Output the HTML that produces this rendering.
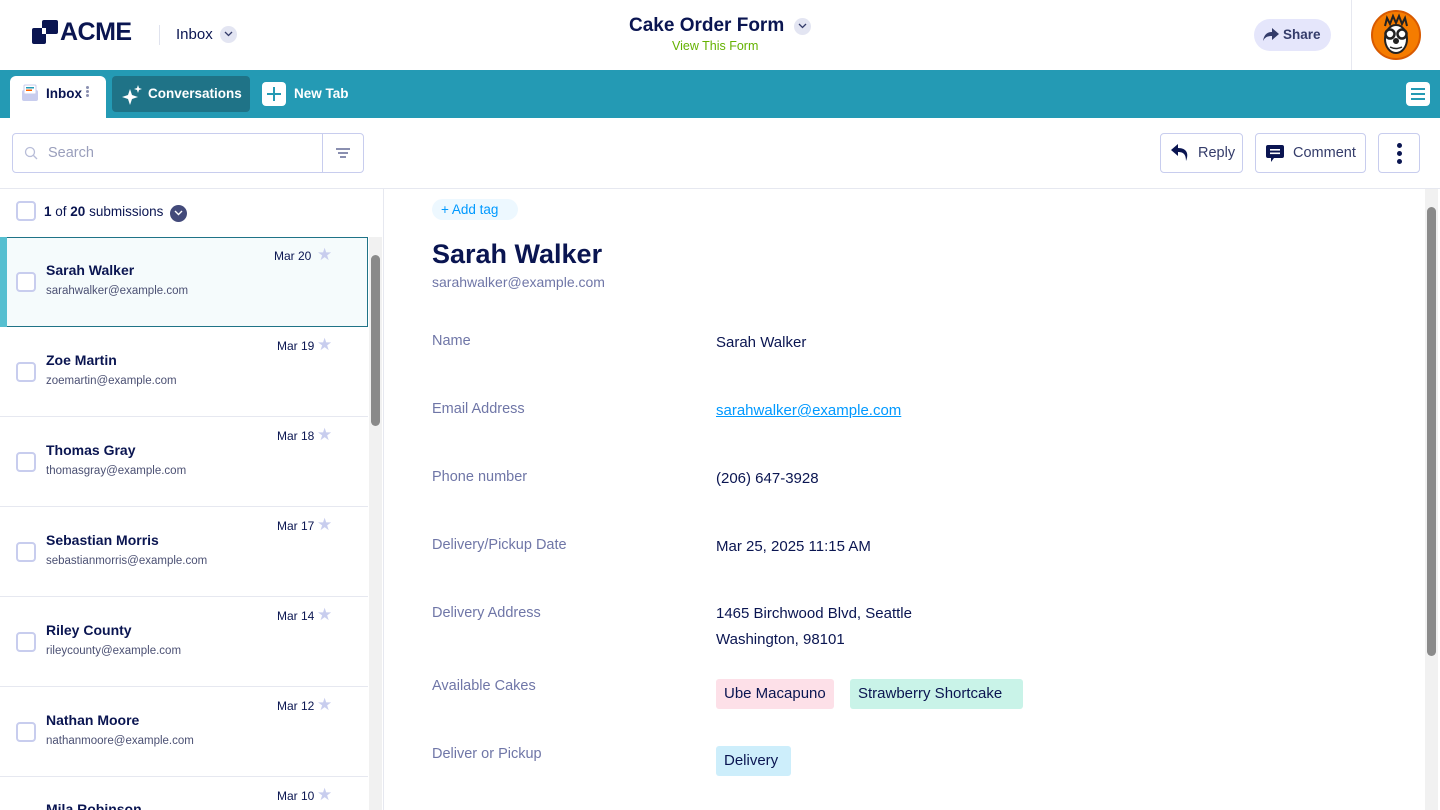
<!DOCTYPE html>
<html style="width:1440px;height:810px;overflow:hidden"><head><meta charset="utf-8"><style>
*{box-sizing:border-box;margin:0;padding:0}
html,body{width:1440px;height:810px;overflow:hidden}
body{font-family:"Liberation Sans",sans-serif;color:#0a1551;background:#fff;position:relative}
.abs{position:absolute}
.hdr{left:0;top:0;width:1440px;height:70px;background:#fff}
.teal{left:0;top:70px;width:1440px;height:48px;background:#249ab4}
.row{position:absolute;left:0;width:368px;height:90px;border-bottom:1px solid #e6e8f0}
.cb{position:absolute;left:16px;width:20px;height:20px;border:2px solid #c8cdee;border-radius:4px;background:#fff}
.nm{position:absolute;left:46px;font-size:14px;font-weight:bold;color:#0a1551}
.em{position:absolute;left:46px;font-size:11.5px;color:#4b5073}
.dt{position:absolute;font-size:12px;color:#0a1551}
.st{position:absolute;color:#c8cdee;font-size:17px}
.lbl{position:absolute;left:432px;font-size:14.5px;color:#6f76a7}
.val{position:absolute;left:716px;font-size:15px;color:#0a1551}
.btn{position:absolute;top:133px;height:40px;border:1px solid #c8cdee;border-radius:4px;background:#fff;font-size:14.5px;color:#343c6a;display:flex;align-items:center}
.tag{position:absolute;height:30px;top:679px;padding:0 8px;font-size:15px;line-height:30px;border-radius:3px}
.chev{position:absolute;width:17px;height:17px;border-radius:50%;background:#e3e5f2}
.chev svg{position:absolute;left:4px;top:5px}
</style></head><body>
<div class="abs hdr"></div>
<svg class="abs" style="left:32px;top:20px" width="26" height="24" viewBox="0 0 26 24"><rect x="10" y="0" width="16" height="14" rx="2" fill="#0a1551"/><rect x="0" y="8" width="14" height="16" rx="2" fill="#0a1551"/><rect x="10" y="8" width="4" height="6" fill="#fff"/></svg>
<div class="abs" style="left:60px;top:18px;font-size:25px;font-weight:bold;letter-spacing:-0.5px;color:#0a1551">ACME</div>
<div class="abs" style="left:159px;top:25px;width:1px;height:20px;background:#e0e3ee"></div>
<div class="abs" style="left:176px;top:26px;font-size:15px">Inbox</div>
<div class="chev" style="left:220px;top:26px"><svg width="9" height="6" viewBox="0 0 9 6"><path d="M1 1L4.5 4.5L8 1" fill="none" stroke="#343c6a" stroke-width="1.3"/></svg></div>
<div class="abs" style="left:629px;top:15px;font-size:19px;font-weight:bold;color:#0a1551">Cake Order Form</div>
<div class="chev" style="left:794px;top:18px"><svg width="9" height="6" viewBox="0 0 9 6"><path d="M1 1L4.5 4.5L8 1" fill="none" stroke="#343c6a" stroke-width="1.3"/></svg></div>
<div class="abs" style="left:672px;top:39px;font-size:12.5px;color:#64b200">View This Form</div>
<div class="abs" style="left:1254px;top:19px;width:77px;height:32px;border-radius:16px;background:#e5e6fb;font-size:13.5px;font-weight:bold;color:#343c6a;line-height:32px;padding-left:29px">Share</div>
<svg class="abs" style="left:1263px;top:28px" width="16" height="14" viewBox="0 0 16 14"><path d="M9 0 L16 6 L9 12 V8 C5 8 2 9 0 13 C1 7 4 4 9 4Z" fill="#343c6a"/></svg>
<div class="abs" style="left:1351px;top:0;width:1px;height:70px;background:#e6e8f0"></div>
<svg class="abs" style="left:1371px;top:10px" width="50" height="50" viewBox="0 0 50 50"><circle cx="25" cy="25" r="24" fill="#f57c00" stroke="#d85a00" stroke-width="2"/><path d="M14 16 L16 8 L19 14 L22 6 L25 13 L28 6 L31 14 L34 8 L36 16" fill="none" stroke="#222" stroke-width="2"/><ellipse cx="25" cy="29" rx="11" ry="14" fill="#fff" stroke="#222" stroke-width="2"/><circle cx="19" cy="24" r="4.5" fill="#fff" stroke="#222" stroke-width="2.5"/><circle cx="31" cy="24" r="4.5" fill="#fff" stroke="#222" stroke-width="2.5"/><circle cx="25" cy="31" r="3" fill="#222"/><path d="M19 37 Q25 40 31 37" fill="none" stroke="#222" stroke-width="1.5"/></svg>
<div class="abs teal"></div>
<div class="abs" style="left:10px;top:76px;width:96px;height:42px;background:#fff;border-radius:6px 6px 0 0"></div>
<svg class="abs" style="left:21px;top:84px" width="18" height="18" viewBox="0 0 18 18"><rect x="1" y="6" width="16" height="11" rx="2" fill="#c8cdee"/><rect x="3" y="1" width="12" height="9" rx="1" fill="#fff" stroke="#c8cdee"/><rect x="5" y="3" width="8" height="1.5" fill="#249ab4"/><rect x="5" y="5.5" width="6" height="1.5" fill="#ff6100"/></svg>
<div class="abs" style="left:46px;top:86px;font-size:13.5px;font-weight:bold;color:#0a1551">Inbox</div>
<div class="abs" style="left:86px;top:86px;width:3px;height:3px;border-radius:50%;background:#8a8fb0;box-shadow:0 4px 0 #8a8fb0,0 8px 0 #8a8fb0"></div>
<div class="abs" style="left:112px;top:76px;width:138px;height:36px;background:#1f7387;border-radius:4px"></div>
<svg class="abs" style="left:122px;top:85px" width="20" height="20" viewBox="0 0 20 20"><path d="M8 4 L10 10 L16 12 L10 14 L8 20 L6 14 L0 12 L6 10Z" fill="#fff"/><path d="M16 0 L17 3 L20 4 L17 5 L16 8 L15 5 L12 4 L15 3Z" fill="#fff"/></svg>
<div class="abs" style="left:148px;top:86px;font-size:13.5px;font-weight:bold;color:#fff">Conversations</div>
<div class="abs" style="left:262px;top:82px;width:24px;height:24px;background:#fff;border-radius:4px"></div>
<div class="abs" style="left:267px;top:93px;width:14px;height:2px;background:#249ab4"></div>
<div class="abs" style="left:273px;top:87px;width:2px;height:14px;background:#249ab4"></div>
<div class="abs" style="left:294px;top:86px;font-size:13.5px;font-weight:bold;color:#fff">New Tab</div>
<div class="abs" style="left:1406px;top:82px;width:24px;height:24px;background:#fff;border-radius:4px"></div>
<div class="abs" style="left:1411px;top:88px;width:14px;height:2px;background:#249ab4;box-shadow:0 5px 0 #249ab4,0 10px 0 #249ab4"></div>
<div class="abs" style="left:12px;top:133px;width:352px;height:40px;border:1px solid #c8cdee;border-radius:4px"></div>
<div class="abs" style="left:322px;top:133px;width:1px;height:40px;background:#c8cdee"></div>
<svg class="abs" style="left:24px;top:146px" width="14" height="14" viewBox="0 0 14 14"><circle cx="6" cy="6" r="4.5" fill="none" stroke="#b8bdd8" stroke-width="1.3"/><path d="M9.5 9.5L13 13" stroke="#b8bdd8" stroke-width="1.3"/></svg>
<div class="abs" style="left:48px;top:145px;font-size:14.5px;color:#9a9fbc">Search</div>
<div class="abs" style="left:336px;top:148px;width:14px;height:1.5px;background:#8a8fb0"></div>
<div class="abs" style="left:338px;top:152px;width:10px;height:1.5px;background:#8a8fb0"></div>
<div class="abs" style="left:340px;top:156px;width:6px;height:1.5px;background:#8a8fb0"></div>
<div class="btn" style="left:1160px;width:83px;padding-left:37px">Reply</div>
<svg class="abs" style="left:1171px;top:144px" width="18" height="17" viewBox="0 0 18 17"><path d="M7 0 L0 6 L7 12 V8 C12 8 15 10 15 17 C18 10 16 4 7 4Z" fill="#0a1551"/></svg>
<div class="btn" style="left:1255px;width:111px;padding-left:37px">Comment</div>
<svg class="abs" style="left:1266px;top:145px" width="18" height="18" viewBox="0 0 18 18"><path d="M2 0H16A2 2 0 0 1 18 2V11A2 2 0 0 1 16 13H8L5 17V13H2A2 2 0 0 1 0 11V2A2 2 0 0 1 2 0Z" fill="#0a1551"/><rect x="4" y="4" width="10" height="1.6" fill="#fff"/><rect x="4" y="7.5" width="10" height="1.6" fill="#fff"/></svg>
<div class="btn" style="left:1378px;width:42px"></div>
<div class="abs" style="left:1397px;top:143px;width:5px;height:5px;border-radius:50%;background:#0a1551;box-shadow:0 8px 0 #0a1551,0 16px 0 #0a1551"></div>
<div class="abs" style="left:0;top:188px;width:1440px;height:1px;background:#e6e8f0"></div>
<div class="abs" style="left:383px;top:189px;width:1px;height:621px;background:#e6e8f0"></div>
<div class="cb" style="top:201px"></div>
<div class="abs" style="left:44px;top:204px;font-size:13.5px;color:#0a1551"><b>1</b> of <b>20</b> submissions</div>
<div class="chev" style="left:170px;top:205px;background:#434a7a"><svg width="9" height="6" viewBox="0 0 9 6"><path d="M1 1L4.5 4.5L8 1" fill="none" stroke="#fff" stroke-width="1.4"/></svg></div>
<div class="row" style="top:237px;background:#f5fbfc;border:1px solid #1f7387"></div>
<div class="abs" style="left:0;top:237px;width:7px;height:90px;background:#56bfd0"></div>
<div class="cb" style="top:272px"></div><div class="nm" style="top:262px">Sarah Walker</div><div class="em" style="top:285px">sarahwalker@example.com</div><div class="dt" style="top:249px;left:274px">Mar 20</div><div class="st" style="top:245px;left:317px">&#9733;</div>
<div class="row" style="top:327px"></div><div class="cb" style="top:362px"></div><div class="nm" style="top:352px">Zoe Martin</div><div class="em" style="top:375px">zoemartin@example.com</div><div class="dt" style="top:339px;left:277px">Mar 19</div><div class="st" style="top:335px;left:317px">&#9733;</div>
<div class="row" style="top:417px"></div><div class="cb" style="top:452px"></div><div class="nm" style="top:442px">Thomas Gray</div><div class="em" style="top:465px">thomasgray@example.com</div><div class="dt" style="top:429px;left:277px">Mar 18</div><div class="st" style="top:425px;left:317px">&#9733;</div>
<div class="row" style="top:507px"></div><div class="cb" style="top:542px"></div><div class="nm" style="top:532px">Sebastian Morris</div><div class="em" style="top:555px">sebastianmorris@example.com</div><div class="dt" style="top:519px;left:277px">Mar 17</div><div class="st" style="top:515px;left:317px">&#9733;</div>
<div class="row" style="top:597px"></div><div class="cb" style="top:632px"></div><div class="nm" style="top:622px">Riley County</div><div class="em" style="top:645px">rileycounty@example.com</div><div class="dt" style="top:609px;left:277px">Mar 14</div><div class="st" style="top:605px;left:317px">&#9733;</div>
<div class="row" style="top:687px"></div><div class="cb" style="top:722px"></div><div class="nm" style="top:712px">Nathan Moore</div><div class="em" style="top:735px">nathanmoore@example.com</div><div class="dt" style="top:699px;left:277px">Mar 12</div><div class="st" style="top:695px;left:317px">&#9733;</div>
<div class="nm" style="top:801px">Mila Robinson</div><div class="dt" style="top:789px;left:277px">Mar 10</div><div class="st" style="top:785px;left:317px">&#9733;</div>
<div class="abs" style="left:369px;top:237px;width:13px;height:573px;background:#f1f1f1"></div>
<div class="abs" style="left:371px;top:255px;width:9px;height:171px;background:#8a8a8a;border-radius:5px"></div>
<div class="abs" style="left:1425px;top:189px;width:13px;height:621px;background:#f1f1f1"></div>
<div class="abs" style="left:1427px;top:207px;width:9px;height:449px;background:#8a8a8a;border-radius:5px"></div>
<div class="abs" style="left:432px;top:199px;width:86px;height:21px;border-radius:11px;background:#edf8ff;color:#0099ff;font-size:13.5px;line-height:21px;padding-left:9px">+ Add tag</div>
<div class="abs" style="left:432px;top:239px;font-size:27px;font-weight:bold;color:#0a1551">Sarah Walker</div>
<div class="abs" style="left:432px;top:274px;font-size:14px;color:#6f76a7">sarahwalker@example.com</div>
<div class="lbl" style="top:333px">Name</div><div class="val" style="top:334px">Sarah Walker</div>
<div class="lbl" style="top:401px">Email Address</div><div class="val" style="top:402px;color:#0099ff;text-decoration:underline">sarahwalker@example.com</div>
<div class="lbl" style="top:469px">Phone number</div><div class="val" style="top:470px">(206) 647-3928</div>
<div class="lbl" style="top:537px">Delivery/Pickup Date</div><div class="val" style="top:538px">Mar 25, 2025 11:15 AM</div>
<div class="lbl" style="top:605px">Delivery Address</div><div class="val" style="top:601px;line-height:26px">1465 Birchwood Blvd, Seattle<br>Washington, 98101</div>
<div class="lbl" style="top:678px">Available Cakes</div>
<div class="tag" style="left:716px;background:#fde0e8">Ube Macapuno</div>
<div class="tag" style="left:850px;background:#c9f3e8;width:173px">Strawberry Shortcake</div>
<div class="lbl" style="top:746px">Deliver or Pickup</div>
<div class="tag" style="left:716px;top:746px;background:#cdeefb;width:75px">Delivery</div>
</body></html>
